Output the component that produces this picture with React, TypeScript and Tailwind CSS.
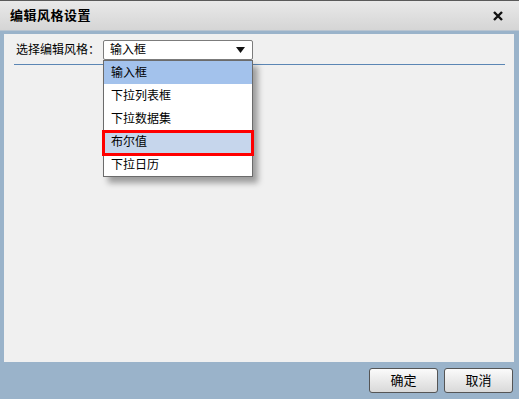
const items = ['输入框', '下拉列表框', '下拉数据集', '布尔值', '下拉日历'];

function App() {
  return (
    <div className="w-[519px] h-[399px] flex flex-col bg-[#9ab3ca] overflow-hidden font-['Liberation_Sans','Noto_Sans_CJK_SC',sans-serif] text-[12px] text-black">
      {/* title bar */}
      <div className="h-[31px] flex items-center justify-between pl-[10px] pr-[16px] border-t border-[#5a5a5a] bg-gradient-to-b from-[#e9e9e9] to-[#d5d5d5] border-b border-b-[#b8c4d0]">
        <span className="text-[13px] font-bold tracking-[0.5px]">编辑风格设置</span>
        <svg width="10" height="10" viewBox="0 0 10 10">
          <path d="M1 1 L9 9 M9 1 L1 9" stroke="#111" strokeWidth="2.4" />
        </svg>
      </div>

      {/* content panel */}
      <div className="pt-[3px] pl-[4px] pr-[5px]">
        <div className="relative h-[328px] bg-[#f0f0f0] pt-[6px] px-[10px]">
          <div className="flex items-center gap-[3px] pl-[2px]">
            <span>选择编辑风格：</span>
            <div className="relative w-[150px] h-[20px] bg-white border border-[#7c7c7c] rounded-[2px] flex items-center pl-[6px]">
              <span>输入框</span>
              <svg className="absolute right-[7px] top-[6px]" width="9" height="6" viewBox="0 0 9 6">
                <path d="M0 0 L9 0 L4.5 6 Z" fill="#111" />
              </svg>
            </div>
          </div>
          <div className="mt-[4px] h-px bg-[#5b86b4] mr-[-1px]" />

          {/* dropdown list */}
          <div className="absolute left-[99px] top-[26px] w-[150px] bg-white border border-[#6b6b6b] shadow-[5px_6px_6px_rgba(0,0,0,0.35)] flex flex-col">
            {items.map((it, i) => (
              <div
                key={it}
                className={
                  'h-[23px] flex items-center pl-[7px] ' +
                  (i === 0 ? 'bg-[#a3c2ec]' : i === 3 ? 'bg-[#c6d6ec]' : 'bg-white')
                }
              >
                {it}
              </div>
            ))}
            <div className="absolute left-[-2px] top-[69px] w-[152px] h-[26px] border-[3px] border-[#ff0000]" />
          </div>
        </div>
      </div>

      {/* footer buttons */}
      <div className="flex justify-end gap-[6px] pr-[6px] pt-[6px]">
        {['确定', '取消'].map((b) => (
          <div
            key={b}
            className="w-[69px] h-[25px] flex items-center justify-center border border-[#555] rounded-[3px] bg-gradient-to-b from-[#fbfbfb] to-[#d9d9d9] text-[13px]"
          >
            {b}
          </div>
        ))}
      </div>
    </div>
  );
}
export default App;
